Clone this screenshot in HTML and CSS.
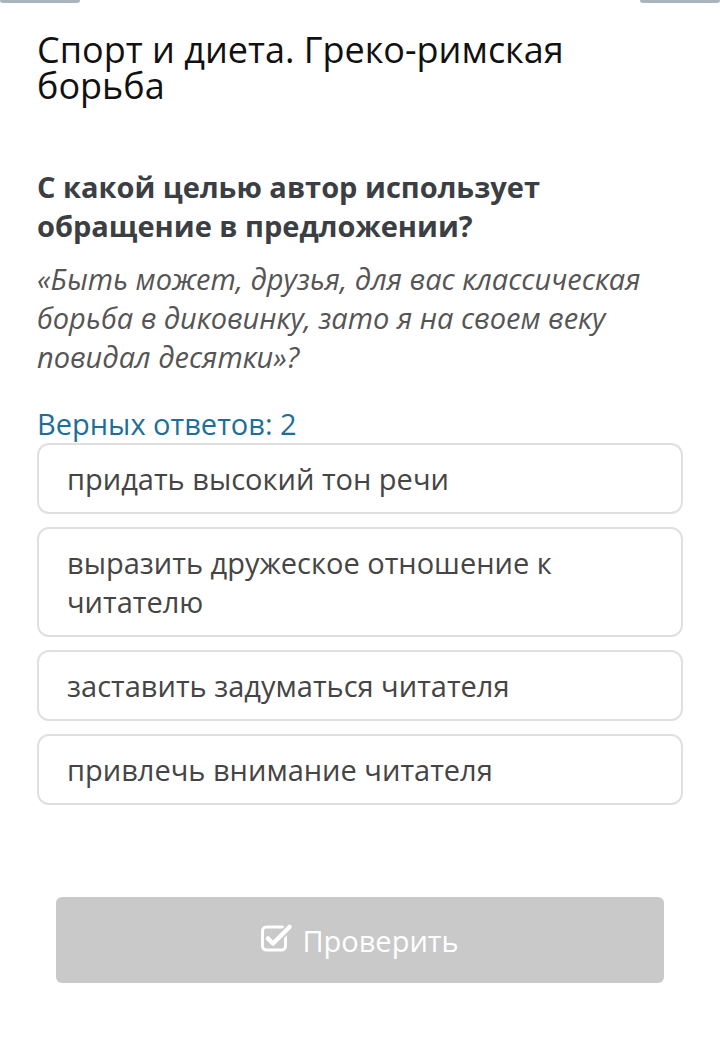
FILE: index.html
```html
<!DOCTYPE html>
<html lang="ru">
<head>
<meta charset="utf-8">
<link rel="stylesheet" href="styles.css">
</head>
<body>
<div class="topbar">
  <span class="tab"></span>
  <span class="tab"></span>
</div>
<main class="page">
  <h1 class="title">Спорт и диета. Греко-римская борьба</h1>
  <h2 class="question">С какой целью автор использует обращение в предложении?</h2>
  <p class="quote">«Быть может, друзья, для вас классическая борьба в диковинку, зато я на своем веку повидал десятки»?</p>
  <div class="count">Верных ответов: 2</div>
  <ul class="options">
    <li class="option">придать высокий тон речи</li>
    <li class="option">выразить дружеское отношение к читателю</li>
    <li class="option">заставить задуматься читателя</li>
    <li class="option">привлечь внимание читателя</li>
  </ul>
  <div class="actions">
    <button class="check" type="button">
      <svg class="icon" viewBox="0 0 32 30" width="32" height="30" aria-hidden="true">
        <rect x="1.5" y="4" width="23" height="23" rx="4" fill="none" stroke="#fff" stroke-width="3"/>
        <path d="M7 15.5 L12 20.5 L28.5 4" fill="none" stroke="#c9c9c9" stroke-width="8" stroke-linecap="round" stroke-linejoin="round"/>
        <path d="M7 15.5 L12 20.5 L28.5 4" fill="none" stroke="#fff" stroke-width="4.5" stroke-linecap="round" stroke-linejoin="round"/>
      </svg>
      <span>Проверить</span>
    </button>
  </div>
</main>
</body>
</html>
```
FILE: styles.css
```css
* { box-sizing: border-box; }
html, body { margin: 0; padding: 0; background: #fff; }
body {
  font-family: "Open Sans", "Noto Sans", sans-serif;
  width: 720px;
  height: 1053px;
  overflow: hidden;
}
.topbar {
  display: flex;
  justify-content: space-between;
  height: 3px;
}
.tab {
  width: 80px;
  height: 3px;
  background: #a9b4bd;
  border-radius: 0 0 3px 3px;
}
.page {
  padding: 0 37px;
}
.title {
  margin: 29px 0 0;
  font-size: 36px;
  line-height: 36px;
  font-weight: 400;
  color: #111;
}
.question {
  margin: 63px 0 0;
  font-size: 29px;
  line-height: 39px;
  font-weight: 700;
  color: #3b3f44;
}
.quote {
  margin: 14px 0 0;
  font-size: 29px;
  line-height: 39px;
  font-style: italic;
  color: #555;
}
.count {
  margin-top: 30px;
  font-size: 29px;
  line-height: 36px;
  color: #1d6f98;
}
.options {
  list-style: none;
  margin: 1px 0 0;
  padding: 0;
  display: flex;
  flex-direction: column;
  gap: 13px;
}
.option {
  border: 2px solid #e0e0e0;
  border-radius: 12px;
  padding: 14px 28px 14px;
  font-size: 29px;
  line-height: 39px;
  color: #454545;
}
.actions {
  padding: 92px 19px 0;
}
.check {
  width: 100%;
  height: 86px;
  border: 0;
  border-radius: 6px;
  background: #c9c9c9;
  color: #fff;
  font-family: inherit;
  font-size: 29px;
  display: flex;
  align-items: center;
  justify-content: center;
  gap: 9px;
}
.icon { display: block; margin-top: -4px; }
```
